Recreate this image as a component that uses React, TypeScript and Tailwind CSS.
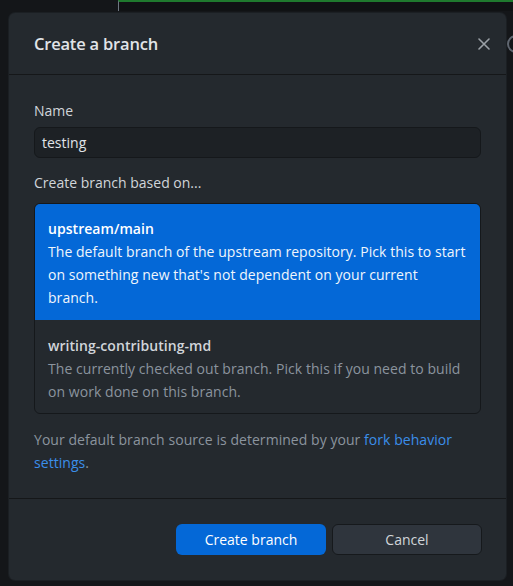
import React from "react";

export default function App() {
  const font = { fontFamily: '"Open Sans", "Noto Sans", Arial, sans-serif' };
  return (
    <div
      className="relative w-[513px] h-[586px] overflow-hidden bg-[#141619] text-[14px]"
      style={font}
    >
      {/* background strip behind the modal */}
      <div className="absolute top-0 left-[118px] right-0 h-[11px] bg-[#101214] border-t-2 border-[#1f7a2e] border-l border-l-[#6e7681]" />
      <div className="absolute top-[35px] left-[507px] w-[18px] h-[18px] rounded-full border-2 border-[#5f6670]" />

      <div className="absolute left-[9px] top-[13px] w-[497px] h-[567px] rounded-[6px] bg-[#24292e] flex flex-col shadow-[0_0_0_1px_#1b1f23]">
        {/* header */}
        <div className="h-[62px] shrink-0 flex items-center justify-between pl-[25px] pr-[12px] border-b border-[#151719]">
          <h1 className="text-[16.5px] font-semibold text-[#e1e4e8] tracking-[-0.2px] pt-[1px]">
            Create a branch
          </h1>
          <button className="w-[20px] h-[20px] flex items-center justify-center">
            <svg width="12" height="12" viewBox="0 0 12 12">
              <path
                d="M1 1 L11 11 M11 1 L1 11"
                stroke="#9aa0a6"
                strokeWidth="1.6"
                strokeLinecap="round"
              />
            </svg>
          </button>
        </div>

        {/* body */}
        <div className="h-[424px] shrink-0 px-[25px] pt-[26px] flex flex-col border-b border-[#151719]">
          <label className="leading-[20px] text-[#d1d5da]">Name</label>
          <div className="mt-[6px] h-[31px] rounded-[6px] bg-[#1d2125] border border-[#15181b] flex items-center px-[7px] text-[#e1e4e8]">
            testing
          </div>
          <div className="mt-[15px] leading-[20px] text-[#d1d5da]">
            Create branch based on...
          </div>

          <div className="mt-[10px] rounded-[6px] border border-[#15181b] overflow-hidden">
            <div className="h-[117px] bg-[#0468d7] -m-px mb-0 px-[14px] pt-[14px] leading-[23px] text-white tracking-[0.05px] rounded-t-[6px]">
              <div className="font-semibold">upstream/main</div>
              <div className="text-[#f0f6fc]">
                The default branch of the upstream repository. Pick this to start
                <br />
                on something new that's not dependent on your current
                <br />
                branch.
              </div>
            </div>
            <div className="h-[93px] px-[13px] pt-[14px] leading-[23px] tracking-[0.05px]">
              <div className="font-semibold text-[#d1d5da]">writing-contributing-md</div>
              <div className="text-[#8b949e]">
                The currently checked out branch. Pick this if you need to build
                <br />
                on work done on this branch.
              </div>
            </div>
          </div>

          <div className="mt-[14px] leading-[23px] text-[#8b949e] tracking-[0.05px]">
            Your default branch source is determined by your{" "}
            <span className="text-[#3b8eea]">fork behavior</span>
            <br />
            <span className="text-[#3b8eea]">settings</span>.
          </div>
        </div>

        {/* footer */}
        <div className="flex-1 flex justify-end items-start gap-[6px] pt-[25px] pr-[24px]">
          <button className="w-[150px] h-[31px] rounded-[6px] bg-[#0468d7] text-white">
            Create branch
          </button>
          <button className="w-[150px] h-[31px] rounded-[6px] bg-[#2f353d] border border-[#16191c] text-[#d1d5da]">
            Cancel
          </button>
        </div>
      </div>
    </div>
  );
}
